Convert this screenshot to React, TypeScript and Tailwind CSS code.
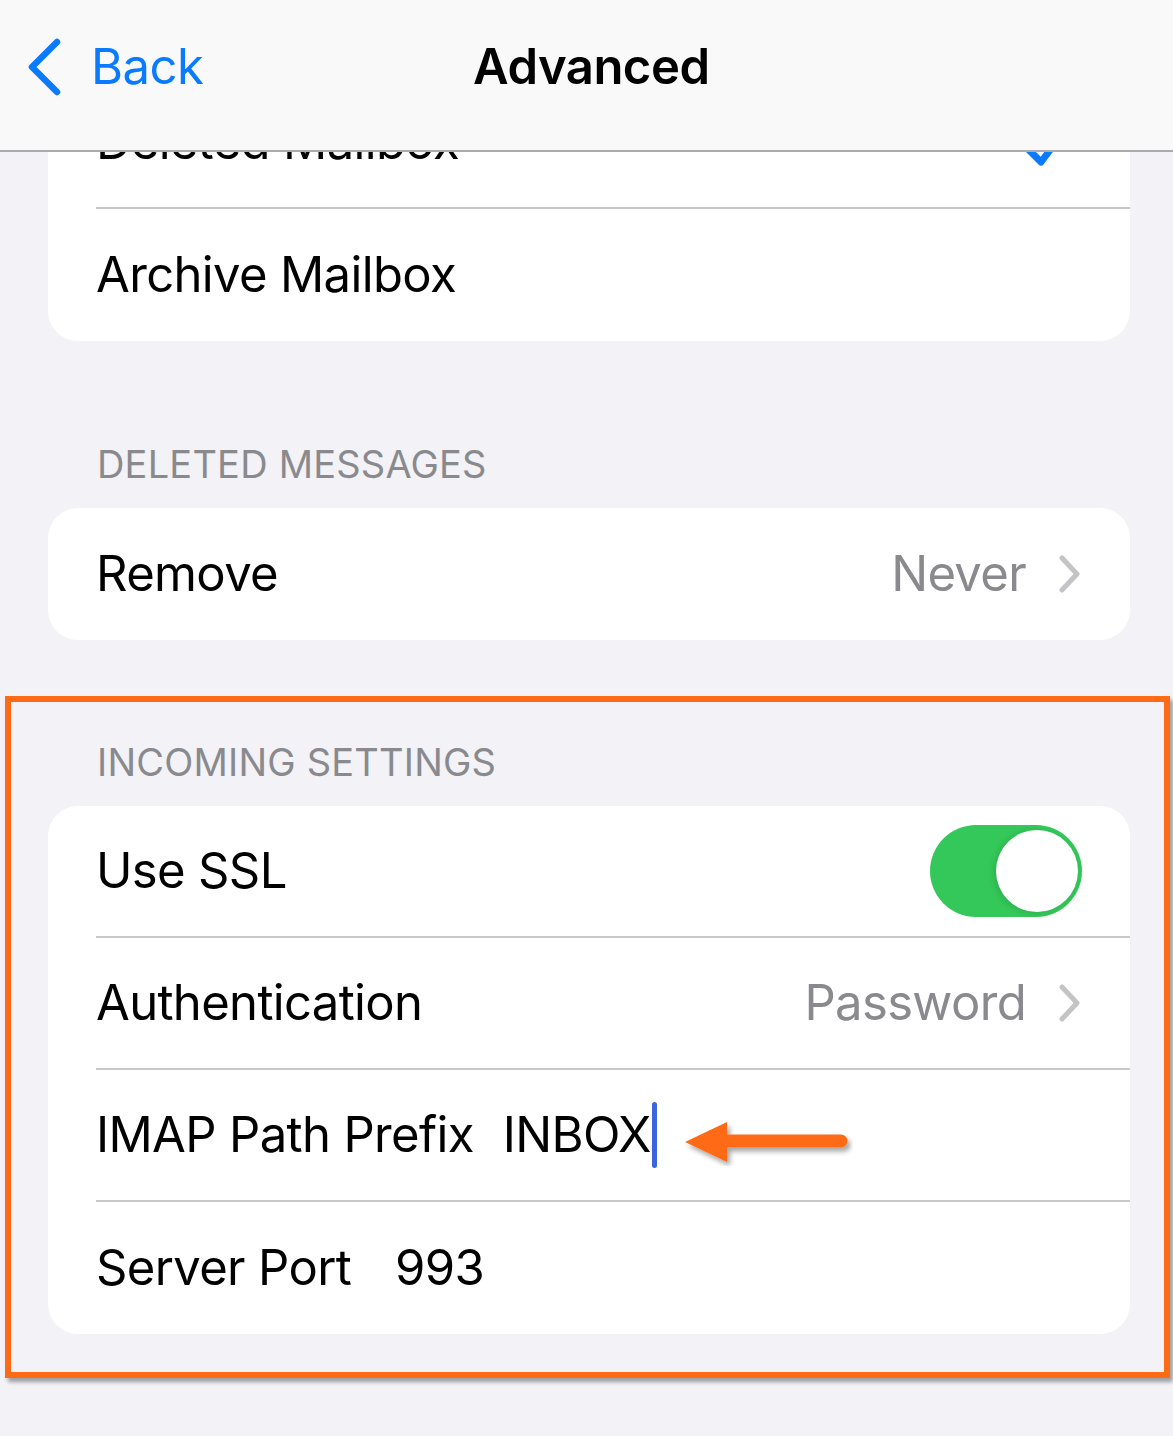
import React from "react";

const font = { fontFamily: 'Inter, "Noto Sans", sans-serif' };

function Chevron() {
  return (
    <svg width="24" height="38" viewBox="0 0 24 38" className="ml-[32px]">
      <path d="M4 3 L19 19 L4 35" fill="none" stroke="#c4c4c7" strokeWidth="5" strokeLinecap="round" strokeLinejoin="round" />
    </svg>
  );
}

function Row({ children, last }: { children: React.ReactNode; last?: boolean }) {
  return (
    <div className="pl-[48px]">
      <div className={`h-[132px] flex items-center pr-[48px] ${last ? "" : "border-b-2 border-[#c8c8cb]"}`}>{children}</div>
    </div>
  );
}

const rowText = "text-[49px] tracking-[-0.65px]";

export default function App() {
  return (
    <div className="relative w-[1173px] h-[1436px] overflow-hidden bg-[#f2f2f7] text-black" style={font}>
      <div className="pt-[77px]">
        {/* card 1 */}
        <div className="ml-[48px] mr-[43px] bg-white rounded-[30px] overflow-hidden">
          <div className="pl-[48px]">
            <div className="h-[132px] flex items-center justify-between pr-[60px] border-b-2 border-[#c8c8cb]">
              <span className={rowText}>Deleted Mailbox</span>
              <svg width="50" height="50" viewBox="0 0 50 50">
                <path d="M6 30 L21 45 L46 12" fill="none" stroke="#0a7aff" strokeWidth="7" strokeLinecap="round" strokeLinejoin="round" />
              </svg>
            </div>
          </div>
          <Row last>
            <span className={rowText}>Archive Mailbox</span>
          </Row>
        </div>

        {/* deleted messages */}
        <div className="pt-[100px] pb-[21px] pl-[97px] text-[38px] leading-[46px] text-[#8a8a8e] tracking-[0.2px]">DELETED MESSAGES</div>
        <div className="ml-[48px] mr-[43px] bg-white rounded-[30px]">
          <Row last>
            <span className={rowText}>Remove</span>
            <span className={`ml-auto ${rowText} text-[#8a8a8e]`}>Never</span>
            <Chevron />
          </Row>
        </div>

        {/* incoming settings highlighted */}
        <div className="mt-[56px] ml-[5px] mr-[3px] border-[6px] border-[#fe6a16] shadow-[3px_4px_4px_rgba(0,0,0,0.35)] pb-[38px]">
          <div className="pt-[37px] pb-[21px] pl-[86px] text-[38px] leading-[46px] text-[#8a8a8e] tracking-[0.2px]">INCOMING SETTINGS</div>
          <div className="ml-[37px] mr-[34px] bg-white rounded-[30px]">
            <Row>
              <span className={rowText}>Use SSL</span>
              <div className="ml-auto w-[152px] h-[92px] rounded-full bg-[#34c759] flex items-center justify-end pr-[4px]">
                <div className="w-[82px] h-[82px] rounded-full bg-white shadow-[-2px_1px_6px_rgba(0,0,0,0.12)]" />
              </div>
            </Row>
            <Row>
              <span className={rowText}>Authentication</span>
              <span className={`ml-auto ${rowText} text-[#8a8a8e]`}>Password</span>
              <Chevron />
            </Row>
            <Row>
              <span className={rowText}>IMAP Path Prefix</span>
              <span className={`ml-[29px] ${rowText}`}>INBOX</span>
              <span className="w-[5px] h-[66px] rounded-full bg-[#3d63df] ml-[1px]" />
              <svg width="172" height="56" viewBox="0 0 172 56" className="ml-[24px] mt-[6px]">
                <defs>
                  <filter id="sh" x="-20%" y="-50%" width="140%" height="200%">
                    <feDropShadow dx="3" dy="4" stdDeviation="2.5" floodColor="#000" floodOpacity="0.35" />
                  </filter>
                </defs>
                <g filter="url(#sh)">
                  <path d="M44 31 L160 31" stroke="#fe6a16" strokeWidth="13" strokeLinecap="round" />
                  <path d="M4 32 L46 12 L46 52 Z" fill="#fe6a16" />
                </g>
              </svg>
            </Row>
            <Row last>
              <span className={rowText}>Server Port</span>
              <span className={`ml-[44px] ${rowText}`}>993</span>
            </Row>
          </div>
        </div>
      </div>

      {/* nav bar overlay */}
      <div className="absolute left-0 right-0 top-0 h-[152px] bg-[#f9f9fa] border-b-2 border-[#ababad]">
        <div className="relative h-[134px] flex items-center">
          <div className="flex items-center pl-[26px]">
            <svg width="38" height="58" viewBox="0 0 38 58">
              <path d="M31 4 L6 29 L31 54" fill="none" stroke="#0a7aff" strokeWidth="6.5" strokeLinecap="round" strokeLinejoin="round" />
            </svg>
            <span className="ml-[27px] text-[49px] text-[#0a7aff] tracking-[-0.5px]">Back</span>
          </div>
          <span className="absolute left-[473px] text-[49px] font-semibold tracking-[-0.5px]">Advanced</span>
        </div>
      </div>
    </div>
  );
}
